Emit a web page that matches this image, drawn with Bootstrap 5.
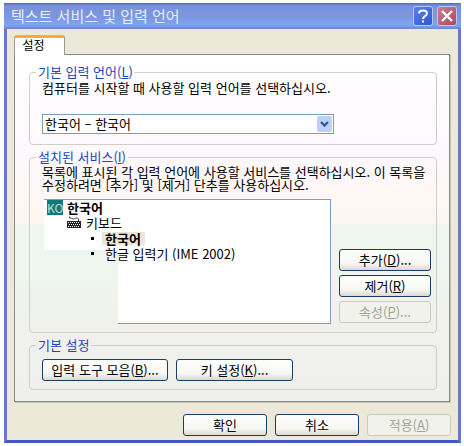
<!DOCTYPE html>
<html lang="ko">
<head>
<meta charset="utf-8">
<meta name="viewport" content="width=device-width, initial-scale=1">
<title>텍스트 서비스 및 입력 언어</title>
<link href="https://cdn.jsdelivr.net/npm/bootstrap@5.3.0/dist/css/bootstrap.min.css" rel="stylesheet">
<style>
body { font: 13px/16px "Noto Sans CJK KR", "Liberation Sans", sans-serif; color: #000; background: #fff; padding: 3px 3px 4px 4px; }
.xp-window { border: 3px solid #6878d0; border-top: 0; border-bottom-color: #4258c4; background: #ece9d8; }
.xp-title { height: 26px; margin: 0 -3px; padding: 0 4px 0 7px; background: linear-gradient(#5268c4 0, #7a92dc 3px, #7c96e0 14px, #7ea6f0 22px, #6c86d0 26px); }
.xp-title h1 { font-size: 15px; line-height: 22px; color: #e4eeff; }
.cap-btn { width: 20px; height: 20px; border: 1px solid #b4c8f4; border-radius: 3px; background: linear-gradient(135deg, #5a82ec, #2c56d0); }
.cap-close { background: linear-gradient(135deg, #c8808e, #a84c60); }
.xp-body { padding: 6px 7px 4px 7px; }
.xp-tab { height: 20px; width: 51px; font-size: 12px; line-height: 12px; padding: 0 18px 3px 6px; border: 1px solid #919b9c; border-top: 3px solid #f0b038; border-bottom: 0; border-radius: 3px 3px 0 0; background: #fff; margin-bottom: -1px; z-index: 1; }
.xp-pane { border: 1px solid #858d8c; box-shadow: 1px 1px 0 #c8c4b4; padding: 9px 12px 11px 14px; margin-right: 1px;
  background: linear-gradient(#fff 0, #fffcff 40px, #fdf8fd 100px, #fef7f8 120px, #fef6f0 168px, #eff5f0 170px, #eff5ef 220px, #f0f0ed 276px, #efefed 100%); }
.xp-group { border: 1px solid #cfcfc6; border-radius: 4px; padding: 0 5px 8px 6px; }
.xp-group legend { float: none; width: auto; font-size: 13px; line-height: 16px; color: #1c48b8; padding: 0 2px; margin: 0; }
.xp-group + .xp-group { margin-top: 4px; }
.inner { padding-left: 6px; }
.xp-select { appearance: none; width: 100%; height: 20px; border: 1px solid #7f9db9; border-radius: 0; background: #fff; padding: 0 20px 0 2px; font-size: 13px; line-height: 16px; color: #000; }
.drop { right: 2px; top: 2px; pointer-events: none; }
.picker { width: 75%; margin: 18px 0 2px; }
.hint { line-height: 13px; }
.tree { min-height: 125px; border-top: 1px solid #8c9cb0; border-right: 1px solid #7f9db9; padding-left: 3px; line-height: 16px;
  background: linear-gradient(#fff, #fff) 0 0 / 74px 50px no-repeat, linear-gradient(#7f9db9, #7f9db9) 74px 100% / 100% 1px no-repeat, linear-gradient(#fff, #fff) 74px 0 / 100% 100% no-repeat; }
.tree ul { list-style: none; margin: 0; padding: 0; }
.lang-row { font-weight: 700; line-height: 15px; }
.lang-mark { background: #107878; color: #b8e0dc; width: 16px; font-weight: 400; font-size: 12px; text-align: center; margin-right: 4px; }
.kbd-row { padding-left: 19px; }
.tree .leaves { padding-left: 44px; }
.tree .leaves li { height: 15px; line-height: 15px; }
.dot { width: 3px; height: 3px; background: #000; margin-right: 11px; }
.picked { background: #ebe7d8; padding: 0 4px 0 3px; margin-left: -3px; line-height: 13px; font-weight: 700; }
.side { width: 92px; gap: 4px; padding-bottom: 1px; }
.xp-btn { height: 22px; padding: 0; font-size: 13px; line-height: 18px; border: 1px solid #1c3c68; border-radius: 3px; color: #000; background: linear-gradient(#fff, #f6f6f2 70%, #dcd8cc); }
.xp-btn:disabled { color: #a0a49a; border-color: #cccabc; background: #f1f3ea; opacity: 1; }
.tools { padding-top: 6px; }
.w-tool { width: 126px; } .w-key { width: 117px; } .w-end { width: 84px; }
</style>
</head>
<body>
<main class="xp-window">
  <header class="xp-title d-flex align-items-center">
    <h1 class="m-0 fw-normal me-auto">텍스트 서비스 및 입력 언어</h1>
    <div class="d-flex gap-1">
      <button type="button" class="cap-btn p-0 d-flex" aria-label="도움말"><svg width="18" height="18" viewBox="0 0 18 18" fill="none" stroke="#fff" stroke-width="2"><path d="M5 6.500C5 2.500 13 2.500 13 6.500C13 9 9 9 9 12"/><path d="M9 13.500v2"/></svg></button>
      <button type="button" class="cap-btn cap-close p-0 d-flex" aria-label="닫기"><svg width="18" height="18" viewBox="0 0 18 18" stroke="#fff" stroke-width="2.400"><path d="M4 4l10 10M14 4L4 14"/></svg></button>
    </div>
  </header>
  <div class="xp-body">
    <div class="d-flex" role="tablist"><button type="button" role="tab" aria-selected="true" class="xp-tab position-relative text-nowrap">설정</button></div>
    <section class="xp-pane">
      <fieldset class="xp-group">
        <legend>기본 입력 언어(<u>L</u>)</legend>
        <div class="inner">
          <label for="lang" class="d-block">컴퓨터를 시작할 때 사용할 입력 언어를 선택하십시오.</label>
          <div class="picker position-relative">
            <select id="lang" class="xp-select d-block"><option>한국어 – 한국어</option></select>
            <svg class="drop position-absolute" width="15" height="16" viewBox="0 0 15 16"><rect width="15" height="16" rx="2" fill="#bdd0f8"/><path d="M4 6l3.500 3.500L11 6" fill="none" stroke="#405880" stroke-width="2.400"/></svg>
          </div>
        </div>
      </fieldset>
      <fieldset class="xp-group">
        <legend>설치된 서비스(<u>I</u>)</legend>
        <p class="inner hint m-0 mb-2">목록에 표시된 각 입력 언어에 사용할 서비스를 선택하십시오. 이 목록을 수정하려면 [추가] 및 [제거] 단추를 사용하십시오.</p>
        <div class="d-flex gap-2 ps-2">
          <div class="tree flex-grow-1">
            <div class="lang-row d-flex"><span class="lang-mark">KO</span>한국어</div>
            <div class="kbd-row d-flex align-items-center gap-1">
              <svg width="16" height="16" viewBox="0 0 16 16"><path d="M3.500 1.500v1.500h2l1 1h2l1-1h2l1 1v2" fill="none" stroke="#444"/><path d="M1 6h14v7H1z" fill="#222"/><path d="M2 7.500h12M3 9.500h11M2 11.500h12" stroke="#fff" stroke-dasharray="1 1"/></svg>키보드</div>
            <ul class="leaves">
              <li class="d-flex align-items-center"><span class="dot"></span><span class="picked">한국어</span></li>
              <li class="d-flex align-items-center"><span class="dot"></span>한글 입력기 (IME 2002)</li>
            </ul>
          </div>
          <div class="side d-flex flex-column justify-content-end">
            <button type="button" class="btn xp-btn">추가(<u>D</u>)...</button>
            <button type="button" class="btn xp-btn">제거(<u>R</u>)</button>
            <button type="button" class="btn xp-btn" disabled>속성(<u>P</u>)...</button>
          </div>
        </div>
      </fieldset>
      <fieldset class="xp-group">
        <legend>기본 설정</legend>
        <div class="inner tools d-flex gap-2">
          <button type="button" class="btn xp-btn w-tool">입력 도구 모음(<u>B</u>)...</button>
          <button type="button" class="btn xp-btn w-key">키 설정(<u>K</u>)...</button>
        </div>
      </fieldset>
    </section>
    <footer class="d-flex justify-content-end gap-2 mt-2 pt-1">
      <button type="button" class="btn xp-btn w-end">확인</button>
      <button type="button" class="btn xp-btn w-end">취소</button>
      <button type="button" class="btn xp-btn w-end" disabled>적용(<u>A</u>)</button>
    </footer>
  </div>
</main>
</body>
</html>
